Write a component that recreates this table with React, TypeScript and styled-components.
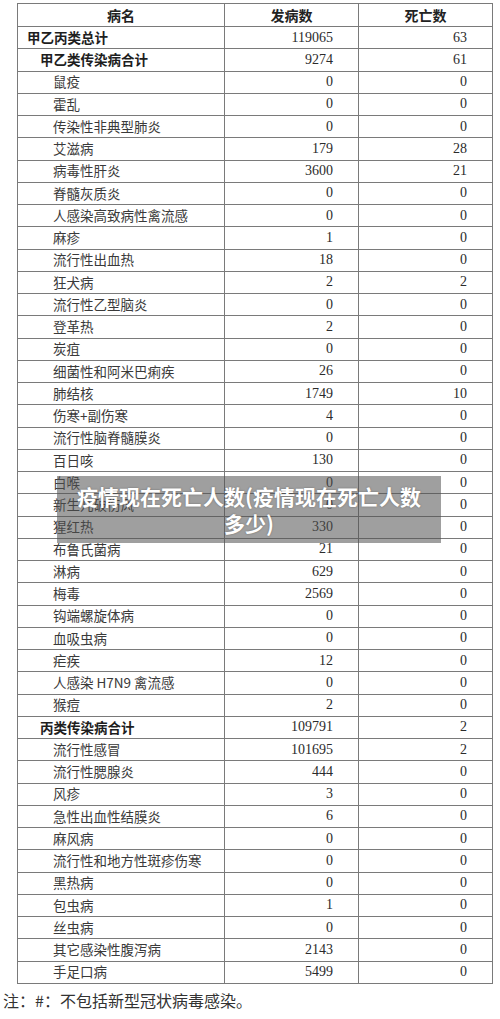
import React from 'react';
import styled, { createGlobalStyle } from 'styled-components';

const GlobalStyle = createGlobalStyle`
  html, body {
    margin: 0;
    padding: 0;
    background: #ffffff;
  }
  body {
    font-family: "Liberation Serif", "Noto Sans CJK SC", serif;
    color: #2b2b2b;
  }
`;

const Page = styled.div`
  position: relative;
  width: 500px;
  height: 1019px;
  padding-top: 3px;
  box-sizing: border-box;
  overflow: hidden;
`;

const Table = styled.table`
  margin-left: 17px;
  width: 475px;
  border-collapse: collapse;
  table-layout: fixed;
  border: 1.5px solid #6a6a6a;
`;

const HeadCell = styled.th`
  height: 22px;
  padding: 0;
  font-family: "Noto Sans CJK SC", sans-serif;
  font-weight: 700;
  font-size: 14px;
  color: #222;
  text-align: center;
  border: 1px solid #7a7a7a;
  line-height: 1;
`;

const Row = styled.tr`
  height: 22.25px;
`;

const NameCell = styled.td<{ $level: number; $bold?: boolean }>`
  padding: 0 0 0 ${(p) => 9 + p.$level * 13}px;
  font-family: "Noto Sans CJK SC", sans-serif;
  font-size: 13.5px;
  font-weight: ${(p) => (p.$bold ? 700 : 400)};
  color: ${(p) => (p.$bold ? '#1e1e1e' : '#3a3a3a')};
  border: 1px solid #7a7a7a;
  white-space: nowrap;
  line-height: 1;
`;

const NumCell = styled.td`
  padding: 0 25px 0 0;
  font-family: "Liberation Serif", serif;
  font-size: 14px;
  color: #2b2b2b;
  text-align: right;
  border: 1px solid #7a7a7a;
  line-height: 1;
`;

const Note = styled.p`
  margin: 4px 0 0 3px;
  font-family: "Noto Sans CJK SC", sans-serif;
  font-size: 16px;
  color: #333;
`;

const Overlay = styled.div`
  position: absolute;
  left: 57px;
  top: 476px;
  width: 384px;
  height: 67px;
  background: rgba(80, 80, 80, 0.55);
  display: flex;
  align-items: center;
  justify-content: center;
  text-align: center;
  color: #ffffff;
  font-family: "Noto Sans CJK SC", sans-serif;
  font-weight: 700;
  font-size: 21px;
  line-height: 27px;
  padding: 0 10px;
  box-sizing: border-box;
  text-shadow: 0 0 2px rgba(0, 0, 0, 0.35);
`;

type Item = { name: string; cases: string; deaths: string; level: number; bold?: boolean };

const rows: Item[] = [
  { name: '甲乙丙类总计', cases: '119065', deaths: '63', level: 0, bold: true },
  { name: '甲乙类传染病合计', cases: '9274', deaths: '61', level: 1, bold: true },
  { name: '鼠疫', cases: '0', deaths: '0', level: 2 },
  { name: '霍乱', cases: '0', deaths: '0', level: 2 },
  { name: '传染性非典型肺炎', cases: '0', deaths: '0', level: 2 },
  { name: '艾滋病', cases: '179', deaths: '28', level: 2 },
  { name: '病毒性肝炎', cases: '3600', deaths: '21', level: 2 },
  { name: '脊髓灰质炎', cases: '0', deaths: '0', level: 2 },
  { name: '人感染高致病性禽流感', cases: '0', deaths: '0', level: 2 },
  { name: '麻疹', cases: '1', deaths: '0', level: 2 },
  { name: '流行性出血热', cases: '18', deaths: '0', level: 2 },
  { name: '狂犬病', cases: '2', deaths: '2', level: 2 },
  { name: '流行性乙型脑炎', cases: '0', deaths: '0', level: 2 },
  { name: '登革热', cases: '2', deaths: '0', level: 2 },
  { name: '炭疽', cases: '0', deaths: '0', level: 2 },
  { name: '细菌性和阿米巴痢疾', cases: '26', deaths: '0', level: 2 },
  { name: '肺结核', cases: '1749', deaths: '10', level: 2 },
  { name: '伤寒+副伤寒', cases: '4', deaths: '0', level: 2 },
  { name: '流行性脑脊髓膜炎', cases: '0', deaths: '0', level: 2 },
  { name: '百日咳', cases: '130', deaths: '0', level: 2 },
  { name: '白喉', cases: '0', deaths: '0', level: 2 },
  { name: '新生儿破伤风', cases: '0', deaths: '0', level: 2 },
  { name: '猩红热', cases: '330', deaths: '0', level: 2 },
  { name: '布鲁氏菌病', cases: '21', deaths: '0', level: 2 },
  { name: '淋病', cases: '629', deaths: '0', level: 2 },
  { name: '梅毒', cases: '2569', deaths: '0', level: 2 },
  { name: '钩端螺旋体病', cases: '0', deaths: '0', level: 2 },
  { name: '血吸虫病', cases: '0', deaths: '0', level: 2 },
  { name: '疟疾', cases: '12', deaths: '0', level: 2 },
  { name: '人感染 H7N9 禽流感', cases: '0', deaths: '0', level: 2 },
  { name: '猴痘', cases: '2', deaths: '0', level: 2 },
  { name: '丙类传染病合计', cases: '109791', deaths: '2', level: 1, bold: true },
  { name: '流行性感冒', cases: '101695', deaths: '2', level: 2 },
  { name: '流行性腮腺炎', cases: '444', deaths: '0', level: 2 },
  { name: '风疹', cases: '3', deaths: '0', level: 2 },
  { name: '急性出血性结膜炎', cases: '6', deaths: '0', level: 2 },
  { name: '麻风病', cases: '0', deaths: '0', level: 2 },
  { name: '流行性和地方性斑疹伤寒', cases: '0', deaths: '0', level: 2 },
  { name: '黑热病', cases: '0', deaths: '0', level: 2 },
  { name: '包虫病', cases: '1', deaths: '0', level: 2 },
  { name: '丝虫病', cases: '0', deaths: '0', level: 2 },
  { name: '其它感染性腹泻病', cases: '2143', deaths: '0', level: 2 },
  { name: '手足口病', cases: '5499', deaths: '0', level: 2 },
];

const App: React.FC = () => {
  return (
    <Page>
      <GlobalStyle />
      <Table>
        <colgroup>
          <col style={{ width: 207 }} />
          <col style={{ width: 134 }} />
          <col style={{ width: 134 }} />
        </colgroup>
        <thead>
          <tr>
            <HeadCell>病名</HeadCell>
            <HeadCell>发病数</HeadCell>
            <HeadCell>死亡数</HeadCell>
          </tr>
        </thead>
        <tbody>
          {rows.map((r) => (
            <Row key={r.name}>
              <NameCell $level={r.level} $bold={r.bold}>
                {r.name}
              </NameCell>
              <NumCell>{r.cases}</NumCell>
              <NumCell>{r.deaths}</NumCell>
            </Row>
          ))}
        </tbody>
      </Table>
      <Note>注：#：不包括新型冠状病毒感染。</Note>
      <Overlay>疫情现在死亡人数(疫情现在死亡人数多少)</Overlay>
    </Page>
  );
};

export default App;
